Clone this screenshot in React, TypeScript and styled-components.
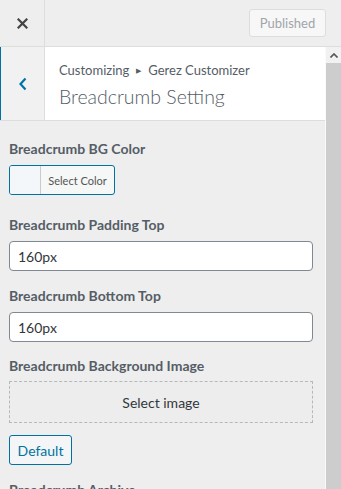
import styled, { createGlobalStyle } from "styled-components";

const colors = {
  bar: "#eeeeee",
  border: "#dddddd",
  text: "#555d66",
  dark: "#32373c",
  blue: "#0071a1",
  white: "#ffffff",
};

const GlobalStyle = createGlobalStyle`
  html, body {
    margin: 0;
    padding: 0;
    height: 489px;
    overflow: hidden;
    background: ${colors.bar};
    font-family: Lato, "Open Sans", sans-serif;
    -webkit-font-smoothing: antialiased;
  }
  * {
    box-sizing: border-box;
  }
`;

const Wrapper = styled.div`
  width: 341px;
  height: 489px;
  display: flex;
  flex-direction: column;
  background: ${colors.bar};
`;

const TopBar = styled.header`
  height: 47px;
  flex: 0 0 47px;
  display: flex;
  align-items: center;
  border-bottom: 1px solid ${colors.border};
  background: ${colors.bar};
`;

const CloseButton = styled.button`
  width: 45px;
  height: 46px;
  border: none;
  border-right: 1px solid ${colors.border};
  background: transparent;
  display: flex;
  align-items: center;
  justify-content: center;
  padding: 0;
`;

const PublishedButton = styled.button`
  margin-left: auto;
  margin-right: 15px;
  height: 28px;
  width: 77px;
  padding: 0;
  border: 1px solid ${colors.border};
  border-radius: 3px;
  background: #f7f7f7;
  color: #a0a5aa;
  font-family: inherit;
  font-size: 13px;
`;

const Body = styled.div`
  flex: 1;
  display: flex;
  min-height: 0;
`;

const Panel = styled.div`
  flex: 1;
  display: flex;
  flex-direction: column;
  min-width: 0;
`;

const SectionHeader = styled.div`
  display: flex;
  flex: 0 0 74px;
  background: ${colors.white};
  border-bottom: 1px solid ${colors.border};
`;

const BackButton = styled.button`
  width: 45px;
  height: 100%;
  padding: 0;
  border: none;
  border-left: 1px solid ${colors.blue};
  border-right: 1px solid ${colors.border};
  background: #f1f1f2;
  display: flex;
  align-items: center;
  justify-content: center;
`;

const HeaderTitles = styled.div`
  padding: 13px 0 0 14px;
  color: ${colors.text};
`;

const Crumbs = styled.div`
  font-size: 13px;
  line-height: 20px;
  display: flex;
  align-items: center;
  gap: 7px;
`;

const Arrow = styled.span`
  font-size: 7px;
  line-height: 1;
`;

const Title = styled.h2`
  margin: 3px 0 0;
  font-size: 19.5px;
  font-weight: 300;
  line-height: 28px;
`;

const Controls = styled.div`
  flex: 0 0 auto;
  padding: 18px 12px 0 9px;
`;

const Control = styled.div<{ $gap?: number }>`
  margin-bottom: ${(p) => (p.$gap ?? 15)}px;
`;

const Label = styled.label`
  display: block;
  font-size: 14px;
  font-weight: 700;
  line-height: 20px;
  color: ${colors.text};
  margin-bottom: 6px;
`;

const ColorButton = styled.button`
  display: flex;
  width: 106px;
  height: 30px;
  padding: 0;
  border: 1px solid ${colors.blue};
  border-radius: 3px;
  background: #f6f7f7;
  overflow: hidden;
  font-family: inherit;
`;

const Swatch = styled.span`
  width: 31px;
  height: 100%;
  background: #f3f7f9;
  border-right: 1px solid #c8ccd0;
`;

const ColorText = styled.span`
  flex: 1;
  display: flex;
  align-items: center;
  justify-content: center;
  font-size: 11px;
  color: #555555;
`;

const TextInput = styled.input`
  display: block;
  width: 100%;
  height: 30px;
  padding: 0 8px;
  border: 1px solid #7e8993;
  border-radius: 4px;
  background: ${colors.white};
  color: ${colors.dark};
  font-family: inherit;
  font-size: 14px;
`;

const ImageDrop = styled.button`
  display: block;
  width: 100%;
  height: 42px;
  margin-top: -1px;
  border: 1px dashed #b4b9be;
  border-radius: 0;
  background: #ededed;
  color: ${colors.dark};
  font-family: inherit;
  font-size: 14px;
`;

const DefaultButton = styled.button`
  margin-top: 12px;
  width: 63px;
  height: 30px;
  padding: 0;
  border: 1px solid ${colors.blue};
  border-radius: 3px;
  background: #f3f5f6;
  color: ${colors.blue};
  font-family: inherit;
  font-size: 14px;
`;

const Scrollbar = styled.div`
  width: 16px;
  flex: 0 0 16px;
  display: flex;
  flex-direction: column;
  background: #f1f1f1;
  border-left: 1px solid #fafafa;
`;

const ScrollArrow = styled.div`
  height: 16px;
  display: flex;
  align-items: center;
  justify-content: center;
  background: #f1f1f1;
`;

const ScrollThumb = styled.div`
  flex: 1;
  background: #cdcdcd;
`;

const App = () => {
  return (
    <Wrapper>
      <GlobalStyle />
      <TopBar>
        <CloseButton>
          <svg width="11" height="11" viewBox="0 0 11 11">
            <path
              d="M1.5 1.5 L9.5 9.5 M9.5 1.5 L1.5 9.5"
              stroke="#444"
              strokeWidth="2.2"
              strokeLinecap="square"
            />
          </svg>
        </CloseButton>
        <PublishedButton>Published</PublishedButton>
      </TopBar>
      <Body>
        <Panel>
          <SectionHeader>
            <BackButton>
              <svg width="10" height="14" viewBox="0 0 10 14">
                <path
                  d="M7.5 1.5 L2.5 7 L7.5 12.5"
                  stroke="#0073aa"
                  strokeWidth="2.2"
                  fill="none"
                />
              </svg>
            </BackButton>
            <HeaderTitles>
              <Crumbs>
                <span>Customizing</span>
                <Arrow>▶</Arrow>
                <span>Gerez Customizer</span>
              </Crumbs>
              <Title>Breadcrumb Setting</Title>
            </HeaderTitles>
          </SectionHeader>
          <Controls>
            <Control $gap={20}>
              <Label>Breadcrumb BG Color</Label>
              <ColorButton>
                <Swatch />
                <ColorText>Select Color</ColorText>
              </ColorButton>
            </Control>
            <Control>
              <Label>Breadcrumb Padding Top</Label>
              <TextInput defaultValue="160px" />
            </Control>
            <Control $gap={14}>
              <Label>Breadcrumb Bottom Top</Label>
              <TextInput defaultValue="160px" />
            </Control>
            <Control>
              <Label>Breadcrumb Background Image</Label>
              <ImageDrop>Select image</ImageDrop>
              <DefaultButton>Default</DefaultButton>
            </Control>
            <Control>
              <Label>Breadcrumb Archive</Label>
            </Control>
          </Controls>
        </Panel>
        <Scrollbar>
          <ScrollArrow>
            <svg width="8" height="5" viewBox="0 0 8 5">
              <path d="M0.5 4.5 L4 1 L7.5 4.5" stroke="#555" strokeWidth="1.6" fill="none" />
            </svg>
          </ScrollArrow>
          <ScrollThumb />
        </Scrollbar>
      </Body>
    </Wrapper>
  );
};

export default App;
